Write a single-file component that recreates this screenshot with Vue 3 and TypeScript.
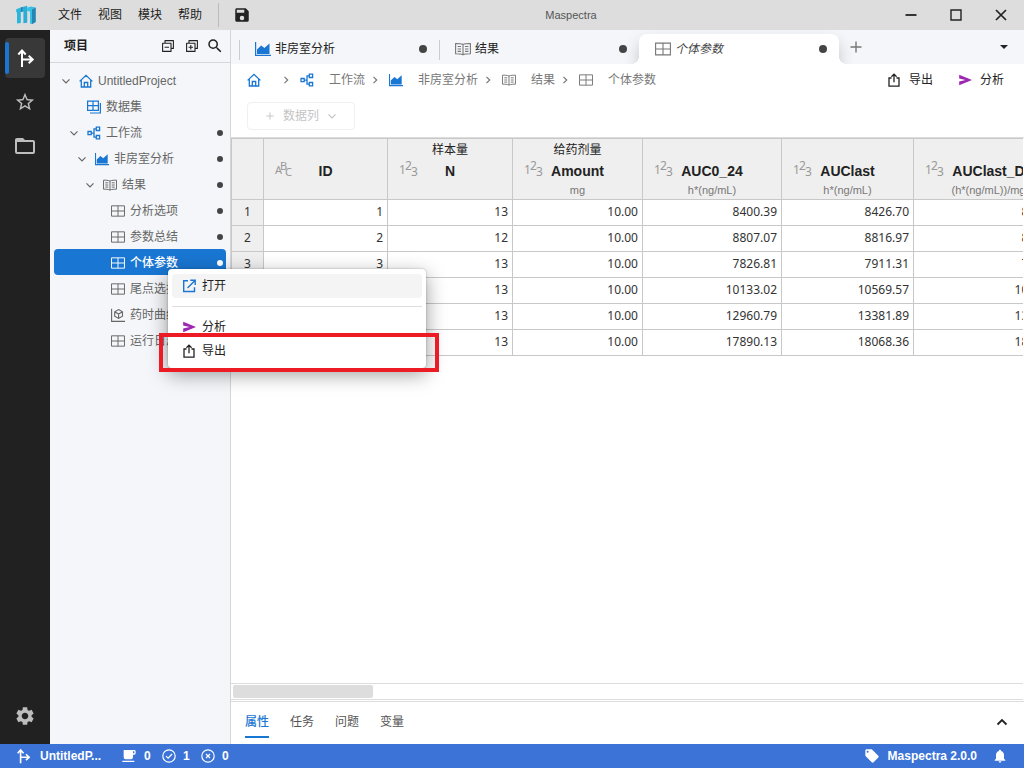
<script setup lang="ts">
interface TreeNode {
  label: string
  level: number
  icon: string
  open?: boolean
  tinted?: boolean
  dirty?: boolean
  selected?: boolean
}

interface Column {
  key: string
  label: string
  name: string
  unit: string
  type: 'text' | 'number'
  width: number
}

const menus: string[] = ['文件', '视图', '模块', '帮助']

const tree: TreeNode[] = [
  { label: 'UntitledProject', level: 0, icon: 'home', open: true, tinted: true },
  { label: '数据集', level: 1, icon: 'dataset', tinted: true },
  { label: '工作流', level: 1, icon: 'flow', open: true, tinted: true, dirty: true },
  { label: '非房室分析', level: 2, icon: 'chart', open: true, tinted: true, dirty: true },
  { label: '结果', level: 3, icon: 'book', open: true, dirty: true },
  { label: '分析选项', level: 4, icon: 'grid', dirty: true },
  { label: '参数总结', level: 4, icon: 'grid', dirty: true },
  { label: '个体参数', level: 4, icon: 'grid', dirty: true, selected: true },
  { label: '尾点选择', level: 4, icon: 'grid', dirty: true },
  { label: '药时曲线', level: 4, icon: 'cube', dirty: true },
  { label: '运行日志', level: 4, icon: 'grid', dirty: true },
]

const tabs = [
  { label: '非房室分析', icon: 'chart', tinted: true, active: false },
  { label: '结果', icon: 'book', tinted: false, active: false },
  { label: '个体参数', icon: 'grid', tinted: false, active: true },
]

const crumbs = [
  { label: '', icon: 'home', tinted: true },
  { label: '工作流', icon: 'flow', tinted: true },
  { label: '非房室分析', icon: 'chart', tinted: true },
  { label: '结果', icon: 'book', tinted: false },
  { label: '个体参数', icon: 'grid', tinted: false },
]

const columns: Column[] = [
  { key: 'id', label: '', name: 'ID', unit: '', type: 'text', width: 124 },
  { key: 'n', label: '样本量', name: 'N', unit: '', type: 'number', width: 125 },
  { key: 'amount', label: '给药剂量', name: 'Amount', unit: 'mg', type: 'number', width: 130 },
  { key: 'auc', label: '', name: 'AUC0_24', unit: 'h*(ng/mL)', type: 'number', width: 139 },
  { key: 'last', label: '', name: 'AUClast', unit: 'h*(ng/mL)', type: 'number', width: 132 },
  { key: 'lastd', label: '', name: 'AUClast_D', unit: '(h*(ng/mL))/mg', type: 'number', width: 150 },
]

const rows: Record<string, string>[] = [
  { id: '1', n: '13', amount: '10.00', auc: '8400.39', last: '8426.70', lastd: '842.67' },
  { id: '2', n: '12', amount: '10.00', auc: '8807.07', last: '8816.97', lastd: '881.70' },
  { id: '3', n: '13', amount: '10.00', auc: '7826.81', last: '7911.31', lastd: '791.13' },
  { id: '4', n: '13', amount: '10.00', auc: '10133.02', last: '10569.57', lastd: '1056.96' },
  { id: '5', n: '13', amount: '10.00', auc: '12960.79', last: '13381.89', lastd: '1338.19' },
  { id: '6', n: '13', amount: '10.00', auc: '17890.13', last: '18068.36', lastd: '1806.84' },
]

const panels: string[] = ['属性', '任务', '问题', '变量']

const glyphs = { text: ['A', 'B', 'C'], number: ['1', '2', '3'] }

const indent = (level: number): string => `${8 + level * 8}px`
</script>

<template>
  <div class="app">
    <svg class="sprite" aria-hidden="true">
      <symbol id="i-home" viewBox="0 0 14 14">
        <path d="M.6 7.400 7 1.400l6.400 6M2.300 6.200V13h9.400V6.200M5.300 13V8.500h3.400V13" fill="none" stroke="currentColor" stroke-width="1.300" />
      </symbol>
      <symbol id="i-dataset" viewBox="0 0 14 14">
        <path d="M.6 1.100h10.800v9.300H.6zM.6 5.700h10.800M6 1.100v9.300M13.400 3v10H3" fill="none" stroke="currentColor" stroke-width="1.200" />
      </symbol>
      <symbol id="i-flow" viewBox="0 0 14 14">
        <path d="M1 5.500h3.200v3.200H1zM9.300 1.200h3.300v3.300H9.300zM9.300 9.500h3.300v3.300H9.300zM4.200 7.100h2.600M9.300 2.900H7v8.300h2.300" fill="none" stroke="currentColor" stroke-width="1.300" />
      </symbol>
      <symbol id="i-chart" viewBox="0 0 16 14">
        <path d="M.6 0v13.400H16" fill="none" stroke="currentColor" stroke-width="1.200" />
        <path d="M2 12V7.500L6.200 3.500l3.200 2.600L14.500 1.500V12z" fill="currentColor" />
      </symbol>
      <symbol id="i-book" viewBox="0 0 16 14">
        <path d="M8 2.500C6 1.500 3 1.500.6 1.500v10.300c2.400 0 5.400 0 7.400 1 2-1 5-1 7.400-1V1.500c-2.400 0-5.400 0-7.400 1zM8 2.500v10.300M2.600 4.500h3.400M2.600 7h3.400M2.600 9.400h3.400M10 4.500h3.400M10 7h3.400M10 9.400h3.400" fill="none" stroke="currentColor" stroke-width="1.100" />
      </symbol>
      <symbol id="i-grid" viewBox="0 0 16 14">
        <path d="M.6 1.100h14.800v11.800H.6zM.6 7h14.800M8 1.100v11.800" fill="none" stroke="currentColor" stroke-width="1.100" />
      </symbol>
      <symbol id="i-cube" viewBox="0 0 14 14">
        <path d="M.6.800v12.600H14M7.600 1.600l3.900 2.200v4.400l-3.900 2.200-3.900-2.200V3.800zM3.700 3.800 7.600 6l3.900-2.200M7.600 6v4.400" fill="none" stroke="currentColor" stroke-width="1.100" />
      </symbol>
      <symbol id="i-down" viewBox="0 0 8 8">
        <path d="m.5 2.300 3.500 3.500 3.500-3.500" fill="none" stroke="currentColor" stroke-width="1.200" />
      </symbol>
      <symbol id="i-right" viewBox="0 0 8 8">
        <path d="M2.500.8 5.700 4 2.500 7.200" fill="none" stroke="currentColor" stroke-width="1.200" />
      </symbol>
      <symbol id="i-branch" viewBox="0 0 20 20">
        <path d="M7 19V3M3.300 6.500 7 2.500l3.700 4M7 11.500h10M13.700 7.800l4 3.700-4 3.700" fill="none" stroke="currentColor" stroke-width="2" />
      </symbol>
      <symbol id="i-star" viewBox="0 0 24 24">
        <path fill="currentColor" d="M12,15.39L8.24,17.66L9.23,13.38L5.91,10.5L10.29,10.13L12,6.09L13.71,10.13L18.09,10.5L14.77,13.38L15.76,17.66M22,9.24L14.81,8.63L12,2L9.19,8.63L2,9.24L7.45,13.97L5.82,21L12,17.27L18.18,21L16.54,13.97L22,9.24Z" />
      </symbol>
      <symbol id="i-folder" viewBox="0 0 24 24">
        <path fill="currentColor" d="M20,18H4V8H20M20,6H12L10,4H4C2.89,4 2,4.89 2,6V18A2,2 0 0,0 4,20H20A2,2 0 0,0 22,18V8C22,6.89 21.1,6 20,6Z" />
      </symbol>
      <symbol id="i-cog" viewBox="0 0 24 24">
        <path fill="currentColor" d="M19.14 12.94c.04-.3.06-.61.06-.94 0-.32-.02-.64-.07-.94l2.03-1.58c.18-.14.23-.41.12-.61l-1.92-3.32c-.12-.22-.37-.29-.59-.22l-2.39.96c-.5-.38-1.03-.7-1.62-.94l-.36-2.54c-.04-.24-.24-.41-.48-.41h-3.84c-.24 0-.43.17-.47.41l-.36 2.54c-.59.24-1.13.57-1.62.94l-2.39-.96c-.22-.08-.47 0-.59.22L2.74 8.87c-.12.21-.08.47.12.61l2.03 1.58c-.05.3-.09.63-.09.94s.02.64.07.94l-2.03 1.58c-.18.14-.23.41-.12.61l1.92 3.32c.12.22.37.29.59.22l2.39-.96c.5.38 1.03.7 1.62.94l.36 2.54c.05.24.24.41.48.41h3.84c.24 0 .44-.17.47-.41l.36-2.54c.59-.24 1.13-.56 1.62-.94l2.39.96c.22.08.47 0 .59-.22l1.92-3.32c.12-.22.07-.47-.12-.61l-2.01-1.58zM12 15.6c-1.98 0-3.6-1.62-3.6-3.6s1.62-3.6 3.6-3.6 3.6 1.62 3.6 3.6-1.62 3.6-3.6 3.6z" />
      </symbol>
      <symbol id="i-save" viewBox="0 0 24 24">
        <path fill="currentColor" d="M15,9H5V5H15M12,19A3,3 0 0,1 9,16A3,3 0 0,1 12,13A3,3 0 0,1 15,16A3,3 0 0,1 12,19M17,3H5C3.89,3 3,3.9 3,5V19A2,2 0 0,0 5,21H19A2,2 0 0,0 21,19V7L17,3Z" />
      </symbol>
      <symbol id="i-search" viewBox="0 0 24 24">
        <path fill="currentColor" d="M15.5 14h-.79l-.28-.27A6.471 6.471 0 0 0 16 9.500 6.500 6.500 0 1 0 9.500 16c1.610 0 3.090-.590 4.230-1.570l.27.280v.79l5 4.990L20.490 19l-4.990-5zm-6 0C7.010 14 5 11.990 5 9.500S7.010 5 9.500 5 14 7.010 14 9.500 11.990 14 9.500 14z" />
      </symbol>
      <symbol id="i-collapse" viewBox="0 0 14 14">
        <path d="M4 4V1.600h8.400v7.800H10M1.600 4.300H10v8.100H1.600zM3.600 8.300H8" fill="none" stroke="currentColor" stroke-width="1.100" stroke-linejoin="round" />
      </symbol>
      <symbol id="i-expand" viewBox="0 0 14 14">
        <path d="M4 4V1.600h8.400v7.800H10M1.600 4.300H10v8.100H1.600zM3.600 8.300H8M5.800 6.100v4.400" fill="none" stroke="currentColor" stroke-width="1.100" stroke-linejoin="round" />
      </symbol>
      <symbol id="i-export" viewBox="0 0 14 14">
        <path d="M4.500 5H2v8.100h10V5H9.500M7 9.300V1.200M4.400 3.700 7 1.100l2.600 2.600" fill="none" stroke="currentColor" stroke-width="1.300" />
      </symbol>
      <symbol id="i-send" viewBox="0 0 24 24">
        <path fill="currentColor" d="M2 21 24 12 2 3v6.500L13 12 2 14.500z" />
      </symbol>
      <symbol id="i-open" viewBox="0 0 14 14">
        <path d="M6 1.700H1.700v10.800h10.800V8.200M8.300 1.200h4.900v4.900M13 1.400 5.500 8.900" fill="none" stroke="currentColor" stroke-width="1.400" />
      </symbol>
      <symbol id="i-tag" viewBox="0 0 24 24">
        <path fill="currentColor" d="M5.5,7A1.5,1.5 0 0,1 4,5.5A1.5,1.5 0 0,1 5.5,4A1.5,1.5 0 0,1 7,5.5A1.5,1.5 0 0,1 5.5,7M21.41,11.58L12.41,2.58C12.05,2.22 11.55,2 11,2H4C2.89,2 2,2.89 2,4V11C2,11.55 2.22,12.05 2.59,12.41L11.58,21.41C11.95,21.77 12.45,22 13,22C13.55,22 14.05,21.77 14.41,21.41L21.41,14.41C21.78,14.05 22,13.55 22,13C22,12.44 21.77,11.94 21.41,11.58Z" />
      </symbol>
      <symbol id="i-bell" viewBox="0 0 24 24">
        <path fill="currentColor" d="M12 22c1.100 0 2-.9 2-2h-4c0 1.100.89 2 2 2zm6-6v-5c0-3.070-1.640-5.640-4.500-6.320V4c0-.83-.67-1.500-1.500-1.500s-1.500.67-1.500 1.500v.68C7.630 5.360 6 7.920 6 11v5l-2 2v1h16v-1l-2-2z" />
      </symbol>
      <symbol id="i-coffee" viewBox="0 0 24 24">
        <path fill="currentColor" d="M2,21H20V19H2M20,8H18V5H20M20,3H4V13A4,4 0 0,0 8,17H14A4,4 0 0,0 18,13V10H20A2,2 0 0,0 22,8V5C22,3.89 21.1,3 20,3Z" />
      </symbol>
      <symbol id="i-check" viewBox="0 0 14 14">
        <path d="M7 .8a6.200 6.200 0 1 0 0 12.400A6.200 6.200 0 1 0 7 .8M4 7.100l2.100 2.100 4-4.200" fill="none" stroke="currentColor" stroke-width="1.200" />
      </symbol>
      <symbol id="i-cancel" viewBox="0 0 14 14">
        <path d="M7 .8a6.200 6.200 0 1 0 0 12.400A6.200 6.200 0 1 0 7 .8M5 5l4 4M9 5 5 9" fill="none" stroke="currentColor" stroke-width="1.200" />
      </symbol>
      <symbol id="i-plus" viewBox="0 0 12 12">
        <path d="M6 .5v11M.5 6h11" fill="none" stroke="currentColor" stroke-width="1.400" />
      </symbol>
      <symbol id="i-caret" viewBox="0 0 8 8">
        <path d="M0 2h8L4 6z" fill="currentColor" />
      </symbol>
      <symbol id="i-up" viewBox="0 0 12 12">
        <path d="m1.500 8.500 4.500-4.500 4.500 4.500" fill="none" stroke="currentColor" stroke-width="1.800" />
      </symbol>
      <symbol id="i-min" viewBox="0 0 12 12">
        <path d="M.5 6h11" stroke="currentColor" stroke-width="1.800" />
      </symbol>
      <symbol id="i-max" viewBox="0 0 12 12">
        <path d="M1 1h10v10H1z" fill="none" stroke="currentColor" stroke-width="1.400" />
      </symbol>
      <symbol id="i-close" viewBox="0 0 12 12">
        <path d="m1 1 10 10M11 1 1 11" stroke="currentColor" stroke-width="1.700" />
      </symbol>
      <symbol id="i-logo" viewBox="0 0 20 20">
        <path d="M.2 4.200 4.800 2.600V18L1 18.600V7.500L.2 7z" fill="#29b5dc" />
        <path d="M4.800 2.600 11.200.8v17L7.400 18.300V6.500L4.800 7z" fill="#2badd6" />
        <path d="M4.800 2.600 6.500 2v4.600L4.800 7z" fill="#1b86b0" />
        <path d="M11.200 2.800 14.800 1.600 19.800 2.400 16 4.200V19.200L14 18.400V6.600L11.200 6z" fill="#35c0e6" />
        <path d="M16 4.200 19.800 2.400V17L16 19.200z" fill="#2386b4" />
      </symbol>
    </svg>

    <header class="titlebar">
      <div class="title-left">
        <svg class="logo"><use href="#i-logo" /></svg>
        <nav class="menubar">
          <button v-for="m in menus" :key="m" type="button">{{ m }}</button>
        </nav>
        <button class="save" type="button" aria-label="save"><svg class="s18"><use href="#i-save" /></svg></button>
      </div>
      <span class="title">Maspectra</span>
      <div class="window-buttons">
        <button type="button" aria-label="minimize"><svg class="s12"><use href="#i-min" /></svg></button>
        <button type="button" aria-label="maximize"><svg class="s12"><use href="#i-max" /></svg></button>
        <button type="button" aria-label="close"><svg class="s12"><use href="#i-close" /></svg></button>
      </div>
    </header>

    <div class="body">
      <nav class="activity">
        <button class="active" type="button" aria-label="workflow"><svg class="s20"><use href="#i-branch" /></svg></button>
        <button type="button" aria-label="favorites"><svg class="s22"><use href="#i-star" /></svg></button>
        <button type="button" aria-label="files"><svg class="s24"><use href="#i-folder" /></svg></button>
        <button class="settings" type="button" aria-label="settings"><svg class="s22"><use href="#i-cog" /></svg></button>
      </nav>

      <aside class="sidebar">
        <div class="side-head">
          <h2>项目</h2>
          <button type="button" aria-label="collapse all"><svg class="s14"><use href="#i-collapse" /></svg></button>
          <button type="button" aria-label="expand all"><svg class="s14"><use href="#i-expand" /></svg></button>
          <button type="button" aria-label="search"><svg class="s18"><use href="#i-search" /></svg></button>
        </div>
        <ul class="tree">
          <li v-for="n in tree" :key="n.label">
            <button type="button" :class="{ selected: n.selected }" :style="{ paddingLeft: indent(n.level) }">
              <svg class="s8"><use v-if="n.open" href="#i-down" /></svg>
              <svg class="s14 node-icon" :class="{ blue: n.tinted }"><use :href="'#i-' + n.icon" /></svg>
              <span class="node-label">{{ n.label }}</span>
              <i v-if="n.dirty" class="dot small"></i>
            </button>
          </li>
        </ul>
      </aside>

      <main class="main">
        <div class="tabs" role="tablist">
          <button v-for="t in tabs" :key="t.label" type="button" role="tab" class="tab" :class="{ active: t.active }">
            <svg class="s16" :class="t.tinted ? 'blue' : 'gray'"><use :href="'#i-' + t.icon" /></svg>
            <span class="tab-label">{{ t.label }}</span>
            <i class="dot"></i>
          </button>
          <button class="add" type="button" aria-label="new tab"><svg class="s12"><use href="#i-plus" /></svg></button>
          <button class="more" type="button" aria-label="all tabs"><svg class="s8"><use href="#i-caret" /></svg></button>
        </div>

        <div class="crumb-bar">
          <nav class="crumbs">
            <template v-for="(c, i) in crumbs" :key="c.icon">
              <svg v-if="i > 0" class="s8 sep"><use href="#i-right" /></svg>
              <a href="#" :aria-label="c.label || 'home'">
                <svg class="s14" :class="{ blue: c.tinted }"><use :href="'#i-' + c.icon" /></svg>
                <span>{{ c.label }}</span>
              </a>
            </template>
          </nav>
          <button type="button"><svg class="s14"><use href="#i-export" /></svg>导出</button>
          <button type="button"><svg class="s14 purple"><use href="#i-send" /></svg>分析</button>
        </div>

        <div class="toolbar">
          <button type="button" disabled>
            <svg class="s8"><use href="#i-plus" /></svg>
            <span>数据列</span>
            <svg class="s8"><use href="#i-down" /></svg>
          </button>
        </div>

        <div class="grid-area">
          <table>
            <colgroup>
              <col class="index-col" />
              <col v-for="c in columns" :key="c.key" :style="{ width: c.width + 'px' }" />
            </colgroup>
            <thead>
              <tr>
                <th></th>
                <th v-for="c in columns" :key="c.key" scope="col">
                  <div class="head-cell">
                    <span class="type" :class="c.type"><i v-for="g in glyphs[c.type]" :key="g">{{ g }}</i></span>
                    <span class="label">{{ c.label }}</span>
                    <span class="name">{{ c.name }}</span>
                    <span class="unit">{{ c.unit }}</span>
                  </div>
                </th>
              </tr>
            </thead>
            <tbody>
              <tr v-for="(r, i) in rows" :key="r.id">
                <th scope="row">{{ i + 1 }}</th>
                <td v-for="c in columns" :key="c.key">{{ r[c.key] }}</td>
              </tr>
            </tbody>
          </table>
        </div>
        <div class="scroll"><div class="thumb"></div></div>

        <div class="panel">
          <button v-for="(p, i) in panels" :key="p" type="button" :class="{ active: i === 0 }">{{ p }}</button>
          <button class="toggle" type="button" aria-label="expand panel"><svg class="s12"><use href="#i-up" /></svg></button>
        </div>
      </main>
    </div>

    <footer class="status">
      <svg class="s16"><use href="#i-branch" /></svg>
      <span class="project">UntitledP...</span>
      <svg class="s16"><use href="#i-coffee" /></svg><span class="count">0</span>
      <svg class="s14"><use href="#i-check" /></svg><span class="count">1</span>
      <svg class="s14"><use href="#i-cancel" /></svg><span class="count">0</span>
      <svg class="s16 tag"><use href="#i-tag" /></svg>
      <span class="version">Maspectra 2.0.0</span>
      <svg class="s16"><use href="#i-bell" /></svg>
    </footer>

    <div class="menu" role="menu">
      <button class="hover" type="button" role="menuitem"><svg class="s14 blue"><use href="#i-open" /></svg>打开</button>
      <hr />
      <button type="button" role="menuitem"><svg class="s14 purple"><use href="#i-send" /></svg>分析</button>
      <button type="button" role="menuitem"><svg class="s14"><use href="#i-export" /></svg>导出</button>
    </div>
    <div class="highlight"></div>
  </div>
</template>

<style>
body {
  margin: 0;
}
</style>

<style scoped>
.app {
  position: relative;
  display: flex;
  flex-direction: column;
  height: 100vh;
  overflow: hidden;
  background: #fff;
  color: #222;
  font: 12px/16px 'Liberation Sans', 'Noto Sans CJK SC', sans-serif;
}
.app *,
.app *::before,
.app *::after {
  box-sizing: border-box;
}
.sprite {
  position: absolute;
  width: 0;
  height: 0;
}
svg {
  display: block;
  flex: none;
}
.s8 { width: 8px; height: 8px; }
.s12 { width: 12px; height: 12px; }
.s14 { width: 14px; height: 14px; }
.s16 { width: 16px; height: 16px; }
.s18 { width: 18px; height: 18px; }
.s20 { width: 20px; height: 20px; }
.s22 { width: 22px; height: 22px; }
.s24 { width: 24px; height: 24px; }
.blue { color: #1976d2; }
.gray { color: #777; }
.purple { color: #9c27b0; }
button {
  display: flex;
  align-items: center;
  margin: 0;
  padding: 0;
  border: 0;
  background: none;
  color: inherit;
  font: inherit;
  white-space: nowrap;
}
.dot {
  width: 8px;
  height: 8px;
  border-radius: 50%;
  background: #444;
}
.dot.small {
  width: 6px;
  height: 6px;
}

.titlebar {
  display: grid;
  grid-template-columns: 1fr auto 1fr;
  align-items: center;
  flex: none;
  height: 30px;
  background: #ddd;
}
.title-left {
  display: flex;
  align-items: center;
  height: 30px;
  padding-left: 16px;
}
.logo {
  width: 20px;
  height: 20px;
}
.menubar {
  display: flex;
  align-items: center;
  gap: 16px;
  height: 24px;
  margin-left: 22px;
  padding-right: 16px;
  border-right: 1px solid #bbb;
}
.save {
  margin-left: 14px;
}
.title {
  padding-left: 118px;
  color: #555;
  font-size: 11px;
}
.window-buttons {
  display: flex;
  justify-content: flex-end;
  padding-right: 1px;
}
.window-buttons button {
  justify-content: center;
  width: 45px;
  height: 30px;
}

.body {
  display: flex;
  flex: 1;
  min-height: 0;
}
.activity {
  display: flex;
  flex-direction: column;
  align-items: center;
  gap: 4px;
  flex: none;
  width: 50px;
  padding: 8px 0;
  background: #212121;
  color: #bdbdbd;
}
.activity button {
  justify-content: center;
  width: 40px;
  height: 40px;
  border-radius: 4px;
}
.activity .active {
  position: relative;
  background: #383838;
  color: #fff;
}
.activity .active::before {
  content: '';
  position: absolute;
  left: 0;
  top: 4px;
  width: 4px;
  height: 32px;
  border-radius: 2px;
  background: #1976d2;
}
.activity .settings {
  margin-top: auto;
}

.sidebar {
  flex: none;
  width: 181px;
  border-right: 1px solid #d5d6d8;
  background: #f4f6f9;
}
.side-head {
  display: flex;
  align-items: center;
  gap: 10px;
  height: 33px;
  padding: 0 6px 0 14px;
  border-bottom: 1px solid #d5d6d8;
}
.side-head h2 {
  margin: 0 auto 0 0;
  font-size: 12px;
  font-weight: 700;
}
.side-head button:last-child {
  margin-left: -3px;
}
.tree {
  margin: 0;
  padding: 4px;
  list-style: none;
}
.tree button {
  width: 100%;
  height: 26px;
  padding-top: 2px;
  padding-right: 3px;
  border-radius: 4px;
  color: #666;
}
.tree .node-icon {
  margin: 0 5px 0 9px;
}
.tree .node-label {
  margin-right: auto;
}
.tree .selected {
  background: #1976d2;
  color: #fff;
  font-weight: 500;
}
.selected .dot {
  background: #fff;
}

.main {
  display: flex;
  flex-direction: column;
  flex: 1;
  min-width: 0;
}
.tabs {
  display: flex;
  align-items: flex-end;
  flex: none;
  height: 34px;
  padding-left: 8px;
  overflow: hidden;
  background: #f4f6f9;
}
.tab {
  position: relative;
  width: 200px;
  height: 30px;
  padding: 0 12px 0 16px;
}
.tab:not(.active)::before {
  content: '';
  position: absolute;
  left: 0;
  top: 6px;
  width: 1px;
  height: 20px;
  background: #ccc;
}
.tab-label {
  margin: 0 auto 0 4px;
}
.tab.active {
  border-radius: 8px 8px 0 0;
  background: #fff;
  box-shadow: 0 8px 16px rgba(0, 0, 0, 0.2);
}
.tab.active .tab-label {
  color: #444;
  font-style: italic;
}
.tab.active::before,
.tab.active::after {
  content: '';
  position: absolute;
  bottom: 0;
  width: 8px;
  height: 8px;
}
.tab.active::before {
  right: 100%;
  background: radial-gradient(circle at 0 0, transparent 8px, #fff 8px);
}
.tab.active::after {
  left: 100%;
  background: radial-gradient(circle at 100% 0, transparent 8px, #fff 8px);
}
.add,
.more {
  justify-content: center;
  width: 34px;
  height: 34px;
  color: #777;
}
.more {
  width: 40px;
  margin-left: auto;
  color: #222;
}

.crumb-bar {
  display: flex;
  align-items: center;
  gap: 25px;
  flex: none;
  height: 32px;
  padding: 0 20px 0 16px;
}
.crumbs {
  display: flex;
  align-items: center;
  margin-right: auto;
  color: #777;
}
.crumbs a {
  display: flex;
  align-items: center;
  gap: 15px;
  color: inherit;
  text-decoration: none;
}
.sep {
  margin: 0 10px 0 6px;
}
.crumb-bar button {
  gap: 8px;
}
.toolbar {
  flex: none;
  padding: 6px 16px 7px;
  border-bottom: 1px solid #ddd;
}
.toolbar button {
  gap: 9px;
  height: 28px;
  padding: 0 18px;
  border: 1px solid #f0f0f0;
  border-radius: 4px;
  color: #c4c4c4;
}

.grid-area {
  flex: 1;
  min-height: 0;
  overflow: hidden;
  margin-right: 1px;
  border-top: 1px solid #c8c8c8;
}
table {
  width: 833px;
  border-collapse: separate;
  border-spacing: 0;
  table-layout: fixed;
}
.index-col {
  width: 33px;
}
th,
td {
  padding: 0;
  border-right: 1px solid #c8c8c8;
  border-bottom: 1px solid #c8c8c8;
  font-family: 'Noto Sans', 'Noto Sans CJK SC', sans-serif;
}
th:first-child {
  border-left: 1px solid #c8c8c8;
}
th {
  background: #efefef;
  font-weight: 400;
  text-align: center;
}
tbody th,
td {
  height: 26px;
  padding-bottom: 2px;
  color: #333;
}
td {
  padding-right: 4px;
  text-align: right;
}
.head-cell {
  display: grid;
  grid-template-columns: 1fr;
  grid-template-rows: 22px 20px 18px;
  place-items: center;
  font-family: 'Liberation Sans', 'Noto Sans CJK SC', sans-serif;
}
.label { grid-area: 1 / 1; }
.name {
  grid-area: 2 / 1;
  font-size: 14px;
  font-weight: 700;
}
.unit {
  grid-area: 3 / 1;
  color: #777;
  font-size: 11px;
}
.type {
  display: flex;
  grid-area: 2 / 1;
  justify-self: start;
  margin-left: 11px;
  color: #999;
  font: 12px/12px 'Noto Sans', sans-serif;
}
.type i {
  width: 6px;
  font-style: normal;
}
.type i:nth-child(2) { margin-top: -4px; }
.type i:nth-child(3) { margin-top: 2px; }
.type.text {
  font-size: 11px;
}
.type.text i {
  width: 5px;
}

.scroll {
  flex: none;
  height: 17px;
  margin-right: 1px;
  padding: 1px 2px;
  border: solid #ddd;
  border-width: 1px 0;
}
.thumb {
  width: 140px;
  height: 13px;
  border-radius: 2px;
  background: #ddd;
}
.panel {
  display: flex;
  gap: 21px;
  flex: none;
  height: 43px;
  margin-top: 1px;
  padding: 0 16px 0 14px;
  border-top: 1px solid #ddd;
  color: #555;
}
.panel button {
  height: 36px;
  padding-top: 5px;
  border-bottom: 2px solid transparent;
}
.panel .active {
  border-color: #1976d2;
  color: #1976d2;
  font-weight: 500;
}
.panel .toggle {
  margin-left: auto;
  color: #222;
}

.status {
  display: flex;
  align-items: center;
  flex: none;
  height: 24px;
  padding: 0 16px 0 15px;
  background: #3b73d6;
  color: #fff;
  font-weight: 700;
}
.project {
  width: 81px;
  margin-left: 9px;
}
.count {
  width: 18px;
  margin-left: 7px;
}
.tag {
  margin-left: auto;
}
.version {
  margin: 0 15px 0 8px;
}

.menu {
  position: absolute;
  left: 168px;
  top: 269px;
  width: 258px;
  padding: 5px 4px;
  border-radius: 4px;
  background: #fff;
  box-shadow: 0 0 2px rgba(0, 0, 0, 0.3), 0 6px 20px rgba(0, 0, 0, 0.4);
}
.menu button {
  gap: 6px;
  width: 100%;
  height: 24px;
  padding-left: 10px;
  border-radius: 4px;
}
.menu .hover {
  background: #f4f4f4;
}
.menu hr {
  height: 1px;
  margin: 8px 0;
  border: 0;
  background: #ddd;
}
.highlight {
  position: absolute;
  left: 159px;
  top: 333px;
  width: 280px;
  height: 39px;
  border: 4px solid #ed1c24;
}
</style>
